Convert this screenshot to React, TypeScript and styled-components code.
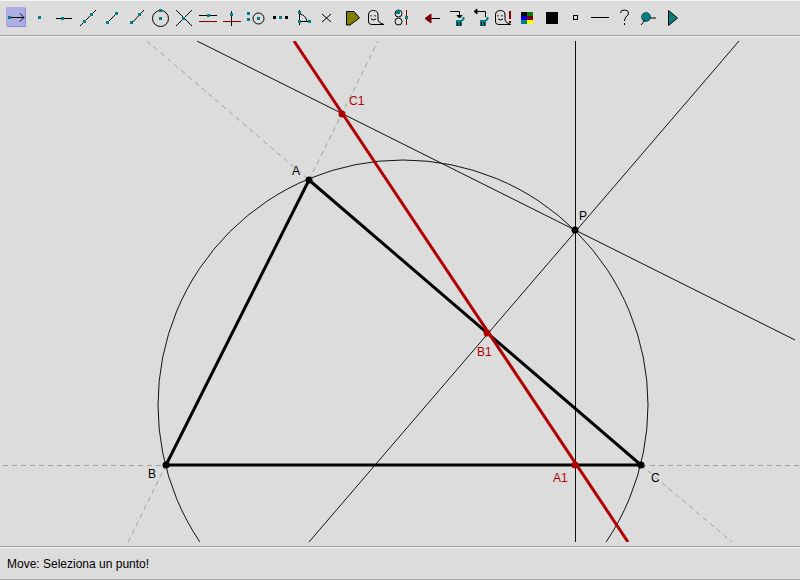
import { ReactNode } from "react";
import styled, { createGlobalStyle } from "styled-components";

const TEAL = "#008080";
const MAROON = "#800000";

const Dot = ({ x, y, s = 3, c = TEAL }: { x: number; y: number; s?: number; c?: string }) => (
  <rect x={x} y={y} width={s} height={s} fill={c} />
);

const Ghost = () => (
  <>
    <path
      d="M368.5 22V15Q368.5 10.5 373.5 10.5Q378 10.5 378 15V20Q378 23 384 24.5H372Q368.5 24.5 368.5 22Z"
      fill="none"
      stroke="#000"
    />
    <path d="M371 15v1.5M375 15v1.5M371 19q2.5 2 5 0" fill="none" stroke="#000" />
  </>
);

const Trash = ({ x }: { x: number }) => (
  <>
    <rect x={x} y={20} width={6} height={6} fill={TEAL} />
    <path d={`M${x + 1.5} 22v4M${x + 4.5} 22v4`} stroke="#000" />
    <path d={`M${x + 6} 20.5l1.5 -1.5v-2`} fill="none" stroke={TEAL} strokeWidth={2} />
  </>
);

const tools: ReactNode[] = [
  <>
    <path d="M9 17.5H24M20 13.5L24 17.5L20 21.5" fill="none" stroke="#000" />
    <Dot x={8} y={16} />
  </>,
  <Dot x={38} y={16} />,
  <>
    <path d="M56 18.5H72" stroke="#000" />
    <Dot x={61} y={17} />
  </>,
  <>
    <path d="M80 26L96 10" stroke="#000" />
    <Dot x={83} y={20} />
    <Dot x={90} y={13} />
  </>,
  <>
    <path d="M107 23L116 14" stroke="#000" />
    <Dot x={106} y={21} />
    <Dot x={115} y={12} />
  </>,
  <>
    <path d="M131 24L144 10" stroke="#000" />
    <Dot x={130} y={21} />
    <Dot x={138} y={13} />
  </>,
  <>
    <circle cx={160.5} cy={18.5} r={8} fill="none" stroke="#000" />
    <Dot x={159} y={9} />
    <Dot x={159} y={17} />
  </>,
  <>
    <path d="M176 10L192 26M192 10L176 26" stroke="#000" />
    <Dot x={182} y={17} />
  </>,
  <>
    <path d="M199 15.5H217" stroke="#000" />
    <path d="M199 21.5H217" stroke={MAROON} />
    <Dot x={207} y={14} />
  </>,
  <>
    <path d="M231.5 11V26" stroke="#000" />
    <path d="M223 21.5H241" stroke={MAROON} />
    <Dot x={230} y={13} />
  </>,
  <>
    <circle cx={258.5} cy={18.5} r={5.5} fill="none" stroke="#000" />
    <Dot x={247} y={12} />
    <Dot x={247} y={18} />
    <Dot x={257} y={17} />
  </>,
  <>
    <Dot x={273} y={16} c="#000" />
    <Dot x={279} y={16} />
    <Dot x={285} y={16} c="#000" />
  </>,
  <>
    <path d="M299.5 10V25M299.5 21.5H310M299.5 14Q306 15 307 21.5" fill="none" stroke="#000" />
    <Dot x={298} y={11} />
    <Dot x={298} y={20} />
    <Dot x={308} y={20} />
  </>,
  <path d="M322 14L331 22M331 14L322 22" stroke="#000" />,
  <path d="M346.5 11.5H354L359.5 18L350 25H346.5Z" fill="#808000" stroke="#000" />,
  <Ghost />,
  <>
    <circle cx={398.5} cy={13.5} r={3.5} fill="none" stroke="#000" />
    <circle cx={398.5} cy={21.5} r={3.5} fill="none" stroke="#000" />
    <Dot x={396} y={10} s={4} />
    <path d="M406.5 10V25" stroke={MAROON} />
    <Dot x={405} y={16} />
  </>,
  <>
    <path d="M431 18.5H440" stroke="#000" />
    <path d="M425 18.5L431 14V23Z" fill={MAROON} stroke={MAROON} />
  </>,
  <>
    <path d="M450 11.5H459.5V16" fill="none" stroke="#000" />
    <path d="M457 15.5H462L459.5 18Z" fill="#000" stroke="#000" />
    <Trash x={456} />
  </>,
  <>
    <path d="M485.5 17V11.5H476" fill="none" stroke="#000" />
    <path d="M477 9V14L474 11.5Z" fill="#000" stroke="#000" />
    <Trash x={480} />
  </>,
  <>
    <g transform="translate(127 0)">
      <Ghost />
    </g>
    <path d="M510 11V19M510 21V23" stroke={MAROON} strokeWidth={2} />
  </>,
  <>
    <rect x={521} y={12} width={6} height={4} fill="#000" />
    <rect x={527} y={12} width={6} height={4} fill="#008000" />
    <rect x={521} y={16} width={6} height={4} fill="#0000e0" />
    <rect x={527} y={16} width={6} height={4} fill={MAROON} />
    <rect x={521} y={20} width={6} height={4} fill={TEAL} />
    <rect x={527} y={20} width={6} height={4} fill="#ffff00" />
  </>,
  <rect x={546} y={12} width={12} height={12} fill="#000" />,
  <rect x={573.5} y={15.5} width={4} height={4} fill="none" stroke="#000" />,
  <path d="M591 17.5H609" stroke="#000" />,
  <path
    d="M620.5 13Q620.5 10 624.5 10Q628.5 10 628.5 13Q628.5 15 626 17Q624.5 18.5 624.5 21M624.5 23V25"
    fill="none"
    stroke="#000"
  />,
  <>
    <circle cx={646} cy={17} r={4.5} fill={TEAL} stroke="#000" strokeWidth={0.5} />
    <path d="M650 18H656M645 20L641 25" stroke="#000" />
  </>,
  <path d="M668.5 10.5V25.5L677.5 18Z" fill={TEAL} stroke="#000" />,
];

const toolLeft = (i: number) => 4 + 24 * i + (i >= 17 ? 7 : 0);

const points: [number, number, string, number, number, string][] = [
  [309, 180, "A", 292, 175, "#000"],
  [166, 465, "B", 148, 478, "#000"],
  [641, 465, "C", 651, 482, "#000"],
  [575, 230, "P", 579, 220, "#000"],
  [575, 465, "A1", 553, 482, "#b00000"],
  [487, 333, "B1", 477, 356, "#b00000"],
  [342, 114, "C1", 349, 105, "#b00000"],
];

export default function App() {
  return (
    <Frame>
      <GlobalStyle />
      <Toolbar>
        {tools.map((icon, i) => (
          <ToolButton key={i} $active={i === 0} $spaced={i === 17}>
            <svg width={24} height={32} viewBox={`${toolLeft(i)} 3 24 32`}>
              {icon}
            </svg>
          </ToolButton>
        ))}
      </Toolbar>
      <Canvas viewBox="0 37 800 509">
        <defs>
          <clipPath id="area">
            <rect x={0} y={41} width={800} height={501} />
          </clipPath>
        </defs>
        <g clipPath="url(#area)" fill="none">
          <g stroke="#a0a0a0" strokeDasharray="5 4">
            <path d="M147 41L309 180" />
            <path d="M309 180L378 41" />
            <path d="M3 465.5H166" />
            <path d="M166 465L128 542" />
            <path d="M641 465.5H800" />
            <path d="M641 465L732 542" />
          </g>
          <g stroke="#111">
            <circle cx={403} cy={405} r={245} />
            <path d="M197 41L795 340" />
            <path d="M739 41L309 542" />
            <path d="M575.5 41V542" />
          </g>
          <path d="M309 180L166 465H641Z" stroke="#000" strokeWidth={3} />
          <path d="M294 41L628 542" stroke="#b00000" strokeWidth={3} />
        </g>
        {points.map(([x, y, name, lx, ly, c]) => (
          <g key={name}>
            <circle cx={x} cy={y} r={3.5} fill={c} />
            <PointLabel x={lx} y={ly} fill={c}>
              {name}
            </PointLabel>
          </g>
        ))}
      </Canvas>
      <StatusBar>Move: Seleziona un punto!</StatusBar>
    </Frame>
  );
}

const GlobalStyle = createGlobalStyle`
  html, body {
    margin: 0;
    padding: 0;
    background: #dcdcdc;
  }
`;

const Frame = styled.div`
  width: 800px;
  height: 580px;
  display: flex;
  flex-direction: column;
  background: #dcdcdc;
  font-family: "Liberation Sans", Arial, sans-serif;
  overflow: hidden;
`;

const Toolbar = styled.div`
  height: 36px;
  box-sizing: border-box;
  flex: none;
  display: flex;
  margin-bottom: 1px;
  padding: 1px 0 0 4px;
  border-top: 1px solid #f4f4f4;
  border-bottom: 1px solid #a0a0a0;
  box-shadow: 0 1px 0 #f4f4f4;
`;

const ToolButton = styled.div<{ $active?: boolean; $spaced?: boolean }>`
  position: relative;
  width: 24px;
  height: 32px;
  flex: none;
  margin-left: ${(p) => (p.$spaced ? "7px" : "0")};

  svg {
    position: relative;
    display: block;
    margin-top: 1px;
  }

  ${(p) =>
    p.$active &&
    `
    &::before {
      content: "";
      position: absolute;
      left: 2px;
      top: 5px;
      width: 19px;
      height: 19px;
      background: #aeaee2;
      box-shadow: 1px 1px 0 #8a8ae0;
    }
  `}
`;

const Canvas = styled.svg`
  display: block;
  width: 800px;
  height: 509px;
  flex: none;
`;

const PointLabel = styled.text`
  font-family: "Liberation Sans", Arial, sans-serif;
  font-size: 12px;
`;

const StatusBar = styled.div`
  flex: 1;
  box-sizing: border-box;
  display: flex;
  align-items: center;
  padding: 2px 0 0 7px;
  font-size: 12px;
  color: #000;
  border-top: 1px solid #a0a0a0;
  border-bottom: 1px solid #a0a0a0;
  box-shadow: inset 0 1px 0 #f4f4f4;
`;
